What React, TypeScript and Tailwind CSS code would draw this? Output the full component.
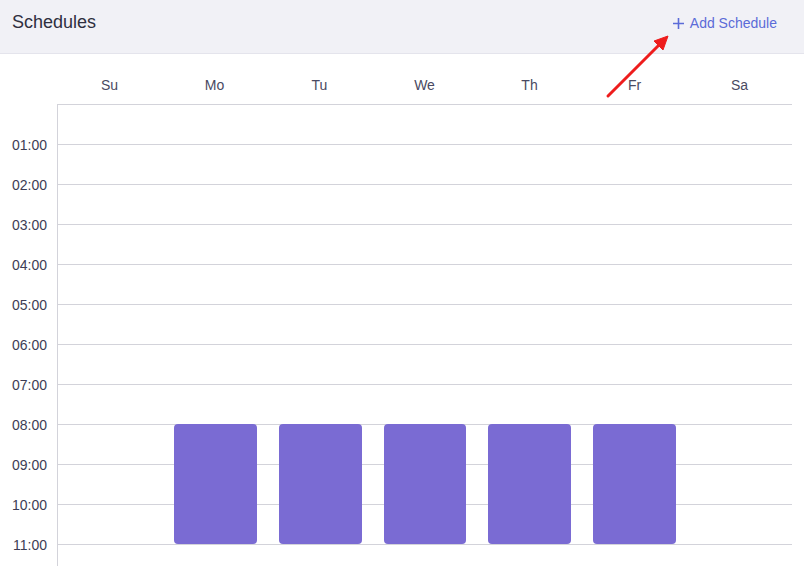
import React from "react";

const days = ["Su", "Mo", "Tu", "We", "Th", "Fr", "Sa"];
const hours = ["01:00", "02:00", "03:00", "04:00", "05:00", "06:00", "07:00", "08:00", "09:00", "10:00", "11:00"];
const rowStarts = ["row-start-1", "row-start-2", "row-start-3", "row-start-4", "row-start-5", "row-start-6", "row-start-7", "row-start-8", "row-start-9", "row-start-10", "row-start-11"];
const blockCols = ["col-start-2", "col-start-3", "col-start-4", "col-start-5", "col-start-6"];

export default function App() {
  return (
    <div className="relative w-[804px] h-[566px] overflow-hidden bg-white" style={{ fontFamily: '"Liberation Sans", Arial, sans-serif' }}>
      <div className="h-[54px] bg-[#f1f1f6] border-b border-[#e4e4ec] flex items-center justify-between pl-3 pr-[27px]">
        <div className="text-[18px] text-[#2f2f3f] -mt-[8px]">Schedules</div>
        <div className="flex items-center gap-[5px] text-[14px] text-[#5b6bd8] -mt-[6px]">
          <svg width="13" height="13" viewBox="0 0 13 13" fill="none" stroke="#5b6bd8" strokeWidth="1.6">
            <path d="M6.5 1v11M1 6.5h11" />
          </svg>
          <span>Add Schedule</span>
        </div>
      </div>
      <div className="pl-[57px] h-[50px] grid grid-cols-7 w-[792px]">
        {days.map((d) => (
          <div key={d} className="text-center text-[14px] leading-[16px] text-[#4a4a62] pt-[23px]">{d}</div>
        ))}
      </div>
      <div className="flex">
        <div className="w-[57px] pt-px">
          {hours.map((h) => (
            <div key={h} className="h-[40px] flex items-end justify-end pr-[10px]">
              <span className="text-[14px] leading-[16px] text-[#3d3d55] translate-y-[8px]">{h}</span>
            </div>
          ))}
        </div>
        <div className="w-[735px] h-[470px] border-l border-t border-[#d3d3da] grid grid-cols-7 grid-rows-[repeat(12,40px)]">
          {rowStarts.map((r) => (
            <div key={r} className={`${r} col-start-1 col-span-7 border-b border-[#d3d3da]`} />
          ))}
          {blockCols.map((c) => (
            <div key={c} className={`${c} row-start-9 row-span-3 mx-[11px] -mt-px mb-px rounded-[4px] bg-[#7a6bd3]`} />
          ))}
        </div>
      </div>
      <svg className="absolute left-0 top-0 pointer-events-none" width="804" height="566">
        <line x1="608" y1="96" x2="660" y2="44" stroke="#ee1c1c" strokeWidth="3" strokeLinecap="round" />
        <polygon points="668,36 654,41 663,50" fill="#ee1c1c" stroke="#ee1c1c" strokeWidth="1" strokeLinejoin="round" />
      </svg>
    </div>
  );
}
